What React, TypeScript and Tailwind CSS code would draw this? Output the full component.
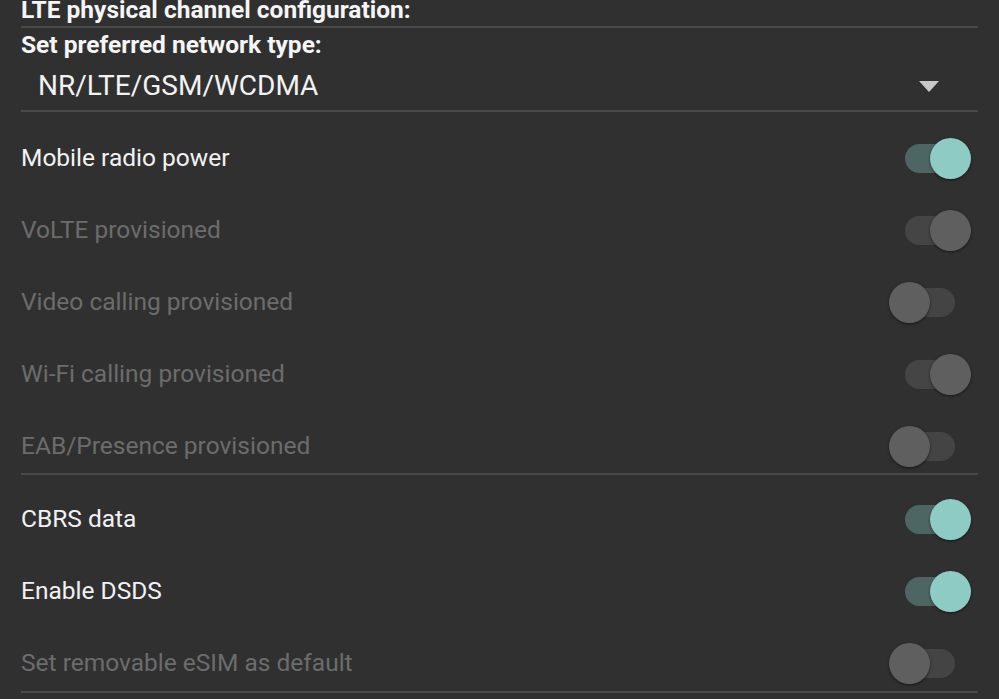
import React from "react";

type Row = { label: string; on: boolean; enabled: boolean };

function Toggle({ on, enabled }: { on: boolean; enabled: boolean }) {
  const track = on
    ? enabled
      ? "bg-[#4e6663]"
      : "bg-[#454545]"
    : "bg-[#444444]";
  const thumb = enabled && on ? "bg-[#8ecbc4]" : "bg-[#5f5f5f]";
  return (
    <div className="relative w-[82px] h-[42px] flex items-center">
      <div className={`absolute left-[16px] w-[50px] h-[29px] rounded-full ${track}`} />
      <div
        className={`absolute w-[41px] h-[41px] rounded-full shadow-[0_1px_3px_rgba(0,0,0,0.5)] ${thumb} ${
          on ? "left-[41px]" : "left-0"
        }`}
      />
    </div>
  );
}

function SwitchRow({ row }: { row: Row }) {
  return (
    <div className="h-[72px] flex items-center justify-between">
      <span
        className={`text-[24.5px] ${row.enabled ? "text-[#f2f2f2]" : "text-[#6c6c6c]"}`}
      >
        {row.label}
      </span>
      <div className="mr-[7px]">
        <Toggle on={row.on} enabled={row.enabled} />
      </div>
    </div>
  );
}

export default function App() {
  const group1: Row[] = [
    { label: "Mobile radio power", on: true, enabled: true },
    { label: "VoLTE provisioned", on: true, enabled: false },
    { label: "Video calling provisioned", on: false, enabled: false },
    { label: "Wi-Fi calling provisioned", on: true, enabled: false },
    { label: "EAB/Presence provisioned", on: false, enabled: false },
  ];
  const group2: Row[] = [
    { label: "CBRS data", on: true, enabled: true },
    { label: "Enable DSDS", on: true, enabled: true },
    { label: "Set removable eSIM as default", on: false, enabled: false },
  ];
  return (
    <div
      className="w-[999px] h-[699px] overflow-hidden bg-[#303030] pl-[21px] pr-[21px]"
      style={{ fontFamily: "Roboto, 'Noto Sans', sans-serif" }}
    >
      <div className="h-[26px] flex items-end pb-[4px] text-[24.5px] font-bold leading-none text-[#f5f5f5]">
        LTE physical channel configuration:
      </div>
      <div className="h-[2px] bg-[#4a4a4a]" />
      <div className="h-[34px] flex items-center text-[24.5px] font-bold leading-none text-[#f5f5f5]">
        Set preferred network type:
      </div>
      <div className="h-[48px] flex items-center justify-between pl-[17px]">
        <span className="text-[28px] leading-none text-[#f2f2f2]">NR/LTE/GSM/WCDMA</span>
        <svg width="20" height="11" viewBox="0 0 20 11" className="mr-[39px]">
          <polygon points="0,0 20,0 10,11" fill="#c8c8c8" />
        </svg>
      </div>
      <div className="h-[2px] bg-[#4a4a4a]" />
      <div className="mt-[10px]">
        {group1.map((r) => (
          <SwitchRow key={r.label} row={r} />
        ))}
      </div>
      <div className="h-[2px] bg-[#4a4a4a] -mt-[9px]" />
      <div className="mt-[8px]">
        {group2.map((r) => (
          <SwitchRow key={r.label} row={r} />
        ))}
      </div>
      <div className="h-[2px] bg-[#4a4a4a] -mt-[8px]" />
    </div>
  );
}
